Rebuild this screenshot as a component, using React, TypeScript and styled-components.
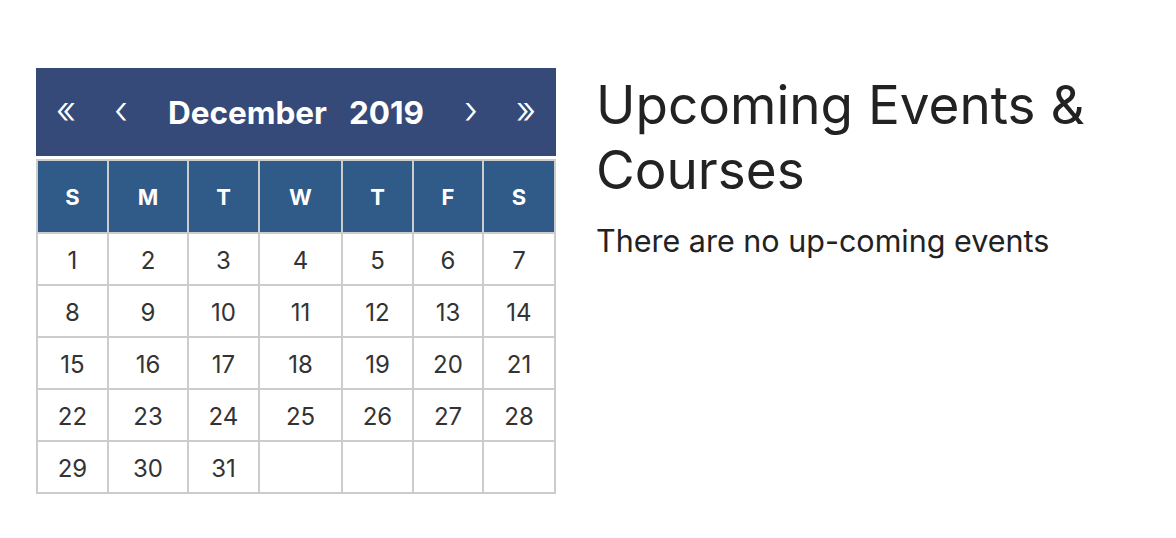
import React from "react";
import styled, { createGlobalStyle } from "styled-components";

const Global = createGlobalStyle`
  html, body { margin: 0; padding: 0; background: #fff; }
  body { font-family: Inter, "Noto Sans", sans-serif; color: #222; }
`;

const Page = styled.div`
  display: flex;
  align-items: flex-start;
  gap: 40px;
  padding: 68px 0 0 36px;
`;

const Calendar = styled.div`
  width: 520px;
  display: flex;
  flex-direction: column;
  gap: 3px;
`;

const NavBar = styled.div`
  height: 88px;
  background: #354a78;
  color: #fff;
  display: grid;
  grid-template-columns: 60px 50px 1fr 50px 60px;
  align-items: center;
`;

const NavButton = styled.span`
  text-align: center;
  font-size: 38px;
  line-height: 1;
  font-weight: 300;
  padding-bottom: 6px;
`;

const Title = styled.div`
  display: flex;
  justify-content: center;
  gap: 22px;
  font-size: 31.5px;
  font-weight: 700;
`;

const Grid = styled.div`
  display: grid;
  grid-template-columns: 71px 80px 71px 83px 71px 70px 72px;
  border-top: 2px solid #cccccc;
  border-left: 2px solid #cccccc;
`;

const HeadCell = styled.div`
  height: 71px;
  background: #305a87;
  color: #fff;
  font-weight: 700;
  font-size: 22px;
  display: flex;
  align-items: center;
  justify-content: center;
  border-right: 2px solid #cccccc;
  border-bottom: 2px solid #cccccc;
`;

const DayCell = styled.div`
  box-sizing: border-box;
  height: 52px;
  padding-top: 2px;
  color: #333;
  font-size: 24px;
  display: flex;
  align-items: center;
  justify-content: center;
  border-right: 2px solid #cccccc;
  border-bottom: 2px solid #cccccc;
`;

const Side = styled.div`
  display: flex;
  flex-direction: column;
  padding-top: 5px;
`;

const Heading = styled.h2`
  margin: 0;
  font-size: 53px;
  font-weight: 400;
  line-height: 65px;
  color: #222;
  width: 520px;
`;

const Note = styled.p`
  margin: 20px 0 0;
  font-size: 30.5px;
  line-height: 36px;
  color: #222;
`;

const weekdays = ["S", "M", "T", "W", "T", "F", "S"];
const days: (number | null)[] = [];
for (let i = 1; i <= 31; i++) days.push(i);
while (days.length < 35) days.push(null);

export default function App() {
  return (
    <>
      <Global />
      <Page>
        <Calendar>
          <NavBar>
            <NavButton>«</NavButton>
            <NavButton>‹</NavButton>
            <Title>
              <span>December</span>
              <span>2019</span>
            </Title>
            <NavButton>›</NavButton>
            <NavButton>»</NavButton>
          </NavBar>
          <Grid>
            {weekdays.map((d, i) => (
              <HeadCell key={i}>{d}</HeadCell>
            ))}
            {days.map((d, i) => (
              <DayCell key={i}>{d ?? ""}</DayCell>
            ))}
          </Grid>
        </Calendar>
        <Side>
          <Heading>Upcoming Events &amp; Courses</Heading>
          <Note>There are no up-coming events</Note>
        </Side>
      </Page>
    </>
  );
}
